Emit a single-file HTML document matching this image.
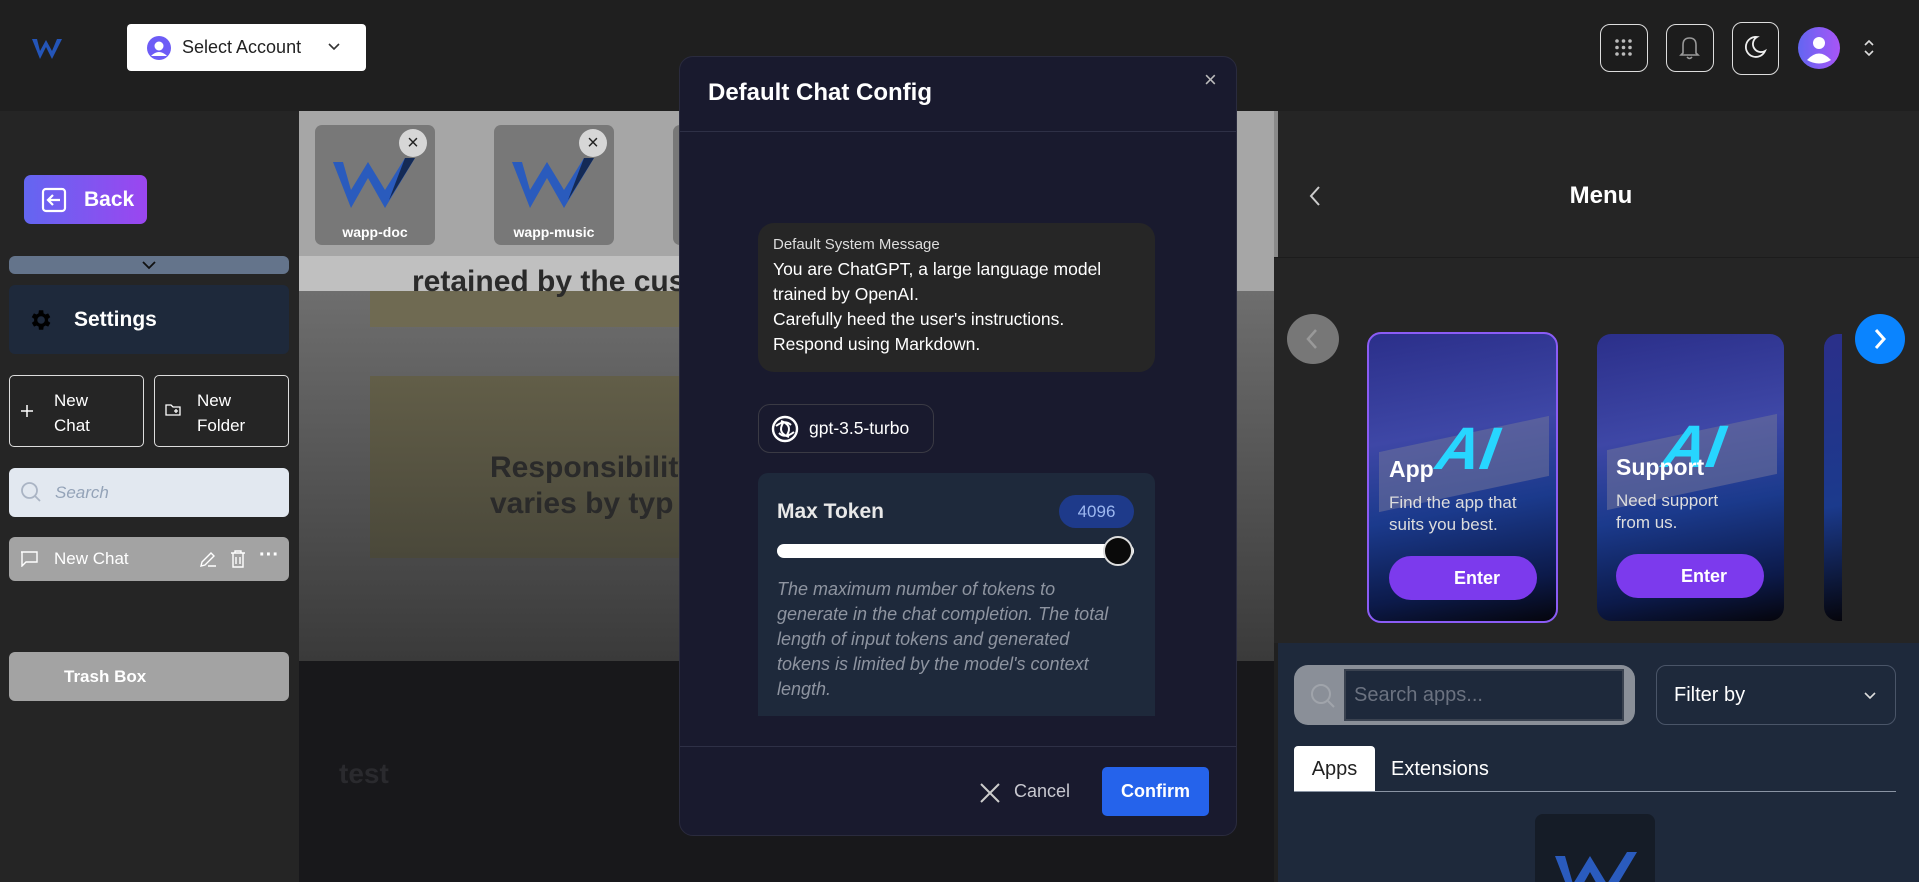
<!DOCTYPE html>
<html><head><meta charset="utf-8">
<style>
*{box-sizing:border-box;margin:0;padding:0}
body{width:1919px;height:882px;overflow:hidden;background:#202020;font-family:"Liberation Sans",sans-serif;color:#fff;position:relative}
.abs{position:absolute}
.btnI{position:absolute;border:1.5px solid #ddd;border-radius:10px;background:#1c1c1c}
</style></head><body>
<!-- top bar -->
<div class="abs" style="left:0;top:0;width:1919px;height:111px;background:#1f1f1f"></div>
<svg class="abs" style="left:31px;top:36px" width="32" height="26" viewBox="0 0 32 26"><path d="M1 3 L9 23 L15 11 L21 23 L31 3 L26 3 L21 15 L15 4 L9 15 L6 3Z" fill="#2455b8"/></svg>
<div class="abs" style="left:127px;top:24px;width:239px;height:47px;background:#fff;border-radius:4px;color:#222;font-size:18px;line-height:47px;padding-left:55px">Select Account
<svg class="abs" style="left:20px;top:12px" width="24" height="24" viewBox="0 0 24 24"><circle cx="12" cy="12" r="12" fill="#6d5cf6"/><circle cx="12" cy="10" r="4.5" fill="#fff"/><path d="M4 20 Q12 12 20 20" fill="#fff"/></svg>
<svg class="abs" style="left:200px;top:18px" width="14" height="10" viewBox="0 0 14 10"><path d="M2 2 L7 7 L12 2" stroke="#333" stroke-width="1.6" fill="none"/></svg></div>
<div class="btnI" style="left:1600px;top:24px;width:48px;height:48px"><svg width="45" height="45" viewBox="0 0 45 45"><g fill="#bbb"><circle cx="16" cy="16" r="1.8"/><circle cx="22.5" cy="16" r="1.8"/><circle cx="29" cy="16" r="1.8"/><circle cx="16" cy="22.5" r="1.8"/><circle cx="22.5" cy="22.5" r="1.8"/><circle cx="29" cy="22.5" r="1.8"/><circle cx="16" cy="29" r="1.8"/><circle cx="22.5" cy="29" r="1.8"/><circle cx="29" cy="29" r="1.8"/></g></svg></div>
<div class="btnI" style="left:1666px;top:24px;width:48px;height:48px"><svg width="45" height="45" viewBox="0 0 45 45"><path d="M16 28 L16 20 Q16 13 22.5 13 Q29 13 29 20 L29 28 L31 30 L14 30Z M20 32 Q22.5 35 25 32" stroke="#999" stroke-width="1.6" fill="none"/></svg></div>
<div class="btnI" style="left:1732px;top:22px;width:47px;height:53px"><svg width="44" height="50" viewBox="0 0 44 50"><path d="M24 14 A10 10 0 1 0 32 28 A8 8 0 0 1 24 14Z" stroke="#eee" stroke-width="1.8" fill="none"/></svg></div>
<svg class="abs" style="left:1798px;top:27px" width="42" height="42" viewBox="0 0 42 42"><defs><linearGradient id="av" x1="0" x2="1"><stop offset="0" stop-color="#6366f1"/><stop offset="1" stop-color="#a855f7"/></linearGradient></defs><circle cx="21" cy="21" r="21" fill="url(#av)"/><circle cx="21" cy="16" r="6" fill="#fff"/><path d="M9 33 Q21 20 33 33 Q21 40 9 33" fill="#fff"/></svg>
<svg class="abs" style="left:1862px;top:39px" width="14" height="18" viewBox="0 0 14 18"><path d="M3 6 L7 2 L11 6 M3 12 L7 16 L11 12" stroke="#ddd" stroke-width="1.6" fill="none"/></svg>

<!-- left sidebar -->
<div class="abs" style="left:0;top:111px;width:299px;height:771px;background:#252525"></div>
<div class="abs" style="left:24px;top:175px;width:123px;height:49px;border-radius:7px;background:linear-gradient(90deg,#6366f1,#9b46f0);font-weight:bold;font-size:21px;line-height:49px;padding-left:60px">Back
<svg class="abs" style="left:17px;top:12px" width="26" height="26" viewBox="0 0 26 26"><rect x="2" y="2" width="22" height="22" rx="3" stroke="#fff" stroke-width="2.2" fill="none"/><path d="M19 13 H8 M12 8 L7 13 L12 18" stroke="#fff" stroke-width="2.2" fill="none"/></svg></div>
<div class="abs" style="left:9px;top:256px;width:280px;height:18px;border-radius:6px;background:#64748b"><svg class="abs" style="left:132px;top:3px" width="16" height="12" viewBox="0 0 16 12"><path d="M2 3 L8 9 L14 3" stroke="#111" stroke-width="1.8" fill="none"/></svg></div>
<div class="abs" style="left:9px;top:285px;width:280px;height:69px;border-radius:6px;background:#1e293b;font-size:21px;font-weight:bold;line-height:69px;padding-left:65px">Settings
<svg class="abs" style="left:18px;top:22px" width="26" height="26" viewBox="0 0 24 24"><path fill="#000" d="M19.4 13a7.5 7.5 0 0 0 0-2l2.1-1.6-2-3.5-2.5 1a7 7 0 0 0-1.7-1L15 3h-4l-.4 2.9a7 7 0 0 0-1.7 1l-2.5-1-2 3.5L6.6 11a7.5 7.5 0 0 0 0 2l-2.1 1.6 2 3.5 2.5-1a7 7 0 0 0 1.7 1L11 21h4l.4-2.9a7 7 0 0 0 1.7-1l2.5 1 2-3.5zM13 15.5a3.5 3.5 0 1 1 0-7 3.5 3.5 0 0 1 0 7z"/></svg></div>
<div class="abs" style="left:9px;top:375px;width:135px;height:72px;border:1.5px solid #ddd;border-radius:5px;font-size:17px;line-height:25px;padding:12px 0 0 44px">New<br>Chat<svg class="abs" style="left:10px;top:28px" width="14" height="14" viewBox="0 0 14 14"><path d="M7 1V13M1 7H13" stroke="#fff" stroke-width="1.5"/></svg></div>
<div class="abs" style="left:154px;top:375px;width:135px;height:72px;border:1.5px solid #ddd;border-radius:5px;font-size:17px;line-height:25px;padding:12px 0 0 42px">New<br>Folder<svg class="abs" style="left:10px;top:27px" width="16" height="14" viewBox="0 0 16 14"><path d="M1 2 H6 L8 4 H15 V12 H1Z M9 8H13 M11 6V10" stroke="#fff" stroke-width="1.3" fill="none"/></svg></div>
<div class="abs" style="left:9px;top:468px;width:280px;height:49px;border-radius:6px;background:#e2e8f0;color:#94a3b8;font-style:italic;font-size:17px;line-height:49px;padding-left:46px">Search
<svg class="abs" style="left:11px;top:13px" width="22" height="22" viewBox="0 0 22 22"><circle cx="9.5" cy="9.5" r="7.5" stroke="#aab4c4" stroke-width="1.8" fill="none"/><path d="M15 15 L20 20" stroke="#aab4c4" stroke-width="1.8"/></svg></div>
<div class="abs" style="left:9px;top:537px;width:280px;height:44px;border-radius:6px;background:#a3a3a3;font-size:17px;line-height:44px;padding-left:45px">New Chat
<svg class="abs" style="left:11px;top:14px" width="18" height="16" viewBox="0 0 18 16"><path d="M1 1H17V11H6L2 15V1" stroke="#fff" stroke-width="1.4" fill="none"/></svg>
<svg class="abs" style="left:190px;top:13px" width="18" height="18" viewBox="0 0 18 18"><path d="M2 16 L3 12 L12 3 L15 6 L6 15Z M9 16H17" stroke="#fff" stroke-width="1.4" fill="none"/></svg>
<svg class="abs" style="left:220px;top:12px" width="18" height="20" viewBox="0 0 18 20"><path d="M2 4H16 M6 4V2H12V4 M4 4V18H14V4 M7 8V15 M11 8V15" stroke="#fff" stroke-width="1.4" fill="none"/></svg>
<span class="abs" style="left:250px;top:-4px;font-size:20px;font-weight:bold">···</span></div>
<div class="abs" style="left:9px;top:652px;width:280px;height:49px;border-radius:6px;background:#a3a3a3;font-size:17px;font-weight:bold;line-height:49px;padding-left:55px">Trash Box</div>

<!-- middle background -->
<div class="abs" style="left:299px;top:111px;width:975px;height:180px;background:#a6a6a6"></div>
<div class="abs" style="left:315px;top:125px;width:120px;height:120px;border-radius:7px;background:#787878"></div>
<div class="abs" style="left:494px;top:125px;width:120px;height:120px;border-radius:7px;background:#787878"></div>
<div class="abs" style="left:673px;top:125px;width:20px;height:120px;border-radius:7px 0 0 7px;background:#787878"></div>
<svg class="abs" style="left:333px;top:150px" width="82" height="62" viewBox="0 0 82 62"><path d="M0 12 L18 58 L35 28 L52 58 L82 8 L72 8 L52 40 L35 12 L18 40 L10 12Z" fill="#2a5bbd"/><path d="M72 8 L82 8 L56 50Z" fill="#142a55"/></svg>
<svg class="abs" style="left:512px;top:150px" width="82" height="62" viewBox="0 0 82 62"><path d="M0 12 L18 58 L35 28 L52 58 L82 8 L72 8 L52 40 L35 12 L18 40 L10 12Z" fill="#2a5bbd"/><path d="M72 8 L82 8 L56 50Z" fill="#142a55"/></svg>
<div class="abs" style="left:315px;top:224px;width:120px;text-align:center;font-size:14px;font-weight:bold">wapp-doc</div>
<div class="abs" style="left:494px;top:224px;width:120px;text-align:center;font-size:14px;font-weight:bold">wapp-music</div>
<div class="abs" style="left:399px;top:129px;width:28px;height:28px;border-radius:50%;background:#d6d6d6;color:#222;text-align:center;line-height:28px;font-size:20px">×</div>
<div class="abs" style="left:579px;top:129px;width:28px;height:28px;border-radius:50%;background:#d6d6d6;color:#222;text-align:center;line-height:28px;font-size:20px">×</div>
<div class="abs" style="left:299px;top:256px;width:380px;height:35px;background:#c0c0c0"></div>
<div class="abs" style="left:299px;top:291px;width:975px;height:370px;background:linear-gradient(#6e6e6e,#3a3a3a)"></div>
<div class="abs" style="left:370px;top:291px;width:320px;height:36px;background:#6f6a52"></div>
<div class="abs" style="left:370px;top:376px;width:320px;height:182px;background:linear-gradient(#625e48,#4a483a)"></div>
<div class="abs" style="left:412px;top:265px;font-size:30px;font-weight:bold;color:#2a2a2a;white-space:nowrap">retained by the cus</div>
<div class="abs" style="left:490px;top:450px;font-size:30px;font-weight:bold;color:#2a2a2a;line-height:36px;white-space:nowrap">Responsibility<br>varies by typ</div>
<div class="abs" style="left:299px;top:661px;width:975px;height:221px;background:#18181b"></div>
<div class="abs" style="left:339px;top:758px;font-size:28px;font-weight:bold;color:#2a2a2e">test</div>

<!-- modal -->
<div class="abs" style="left:679px;top:56px;width:558px;height:780px;border-radius:14px;background:#191a2e;border:1px solid #2a2b3e">
<div class="abs" style="left:28px;top:22px;font-size:24px;font-weight:bold">Default Chat Config</div>
<div class="abs" style="left:524px;top:10px;font-size:22px;color:#bbb">×</div>
<div class="abs" style="left:0;top:74px;width:556px;height:1px;background:#2e3046"></div>
<div class="abs" style="left:78px;top:166px;width:397px;height:149px;border-radius:16px;background:#262626;padding:13px 0 0 15px">
<div style="font-size:15px;color:#ddd">Default System Message</div>
<div style="font-size:17.5px;line-height:25px;margin-top:4px">You are ChatGPT, a large language model<br>trained by OpenAI.<br>Carefully heed the user's instructions.<br>Respond using Markdown.</div></div>
<div class="abs" style="left:78px;top:347px;width:176px;height:49px;border-radius:12px;border:1.5px solid #3a3a44;font-size:17.5px;line-height:46px;padding-left:50px">gpt-3.5-turbo
<svg class="abs" style="left:12px;top:10px" width="28" height="28" viewBox="0 0 28 28"><circle cx="14" cy="14" r="12" stroke="#fff" stroke-width="2.4" fill="none"/><path d="M5 11 Q14 4 20 10 M23 17 Q14 24 8 18 M10 6 Q22 10 16 20 M18 22 Q6 18 12 8" stroke="#fff" stroke-width="2" fill="none"/></svg></div>
<div class="abs" style="left:78px;top:416px;width:397px;height:243px;background:#1e293b;border-radius:10px 10px 0 0">
<div class="abs" style="left:19px;top:27px;font-size:21px;font-weight:bold;color:#e8e8e8">Max Token</div>
<div class="abs" style="left:301px;top:22px;width:75px;height:33px;border-radius:17px;background:#1e3a8a;color:#9db8f0;font-size:17px;text-align:center;line-height:33px">4096</div>
<div class="abs" style="left:19px;top:71px;width:357px;height:14px;border-radius:7px;background:#fff"></div>
<div class="abs" style="left:345px;top:63px;width:30px;height:30px;border-radius:50%;background:#0a0a0a;border:2px solid #ddd"></div>
<div class="abs" style="left:19px;top:104px;width:380px;font-size:18px;font-style:italic;line-height:25px;color:#8e94a0;white-space:nowrap">The maximum number of tokens to<br>generate in the chat completion. The total<br>length of input tokens and generated<br>tokens is limited by the model's context<br>length.</div></div>
<div class="abs" style="left:0;top:689px;width:556px;height:1px;background:#2e3046"></div>
<svg class="abs" style="left:299px;top:725px" width="22" height="22" viewBox="0 0 22 22"><path d="M2 2 L20 20 M20 2 L2 20" stroke="#ccc" stroke-width="2"/></svg>
<div class="abs" style="left:334px;top:724px;font-size:18px;color:#c8c8d0">Cancel</div>
<div class="abs" style="left:422px;top:710px;width:107px;height:49px;border-radius:5px;background:#2563eb;text-align:center;line-height:49px;font-size:18px;font-weight:bold">Confirm</div>
</div>

<!-- right panel -->
<div class="abs" style="left:1274px;top:111px;width:645px;height:532px;background:#252525"></div>
<div class="abs" style="left:1274px;top:111px;width:4px;height:146px;background:#8a8a8a"></div>
<div class="abs" style="left:1274px;top:257px;width:645px;height:1px;background:#1c1c1c"></div>
<svg class="abs" style="left:1308px;top:185px" width="14" height="22" viewBox="0 0 14 22"><path d="M11 2 L3 11 L11 20" stroke="#ccc" stroke-width="2" fill="none"/></svg>
<div class="abs" style="left:1530px;top:182px;width:142px;text-align:center;font-size:24px;font-weight:bold">Menu</div>
<div class="abs" style="left:1287px;top:314px;width:52px;height:50px;border-radius:50%;background:#777"><svg width="52" height="50" viewBox="0 0 52 50"><path d="M29 16 L21 25 L29 34" stroke="#999" stroke-width="2.5" fill="none"/></svg></div>
<div class="abs" style="left:1855px;top:314px;width:50px;height:50px;border-radius:50%;background:#0a84ff"><svg width="50" height="50" viewBox="0 0 50 50"><path d="M21 16 L29 25 L21 34" stroke="#fff" stroke-width="3" fill="none"/></svg></div>
<div class="abs" style="left:1367px;top:332px;width:191px;height:291px;border-radius:14px;border:2.5px solid #8b5cf6;background:linear-gradient(170deg,#2b2f8a 0%,#3e47a6 35%,#1b3a8c 60%,#0c1a4a 85%,#05050c 100%);overflow:hidden">
<div class="abs" style="left:10px;top:100px;width:170px;height:60px;background:#6a6f9a;opacity:.6;transform:skewY(-12deg)"></div>
<div class="abs" style="left:70px;top:80px;font-size:60px;font-weight:bold;color:#27d6ff;transform:skewX(-20deg)">AI</div>
<div class="abs" style="left:20px;top:122px;font-size:23px;font-weight:bold">App</div>
<div class="abs" style="left:20px;top:158px;font-size:17px;line-height:22px;color:#ddd">Find the app that<br>suits you best.</div>
<div class="abs" style="left:20px;top:222px;width:148px;height:44px;border-radius:22px;background:#7c3aed;font-size:18px;font-weight:bold;text-align:center;line-height:44px;padding-left:28px">Enter</div></div>
<div class="abs" style="left:1597px;top:334px;width:187px;height:287px;border-radius:14px;background:linear-gradient(170deg,#2b2f8a 0%,#3e47a6 35%,#1b3a8c 60%,#0c1a4a 85%,#05050c 100%);overflow:hidden">
<div class="abs" style="left:10px;top:98px;width:170px;height:60px;background:#6a6f9a;opacity:.6;transform:skewY(-12deg)"></div>
<div class="abs" style="left:68px;top:78px;font-size:60px;font-weight:bold;color:#27d6ff;transform:skewX(-20deg)">AI</div>
<div class="abs" style="left:19px;top:120px;font-size:23px;font-weight:bold">Support</div>
<div class="abs" style="left:19px;top:156px;font-size:17px;line-height:22px;color:#ddd">Need support<br>from us.</div>
<div class="abs" style="left:19px;top:220px;width:148px;height:44px;border-radius:22px;background:#7c3aed;font-size:18px;font-weight:bold;text-align:center;line-height:44px;padding-left:28px">Enter</div></div>
<div class="abs" style="left:1824px;top:334px;width:18px;height:287px;border-radius:14px 0 0 14px;background:linear-gradient(170deg,#2b2f8a,#1b3a8c 60%,#05050c)"></div>
<div class="abs" style="left:1278px;top:643px;width:641px;height:239px;background:#1e293b"></div>
<div class="abs" style="left:1294px;top:665px;width:341px;height:60px;border-radius:14px;background:#8a8f98"><div class="abs" style="left:50px;top:4px;width:280px;height:52px;background:#1e293b;border:2px solid #3a4250;font-size:20px;color:#6b7280;line-height:48px;padding-left:8px">Search apps...</div>
<svg class="abs" style="left:16px;top:18px" width="26" height="26" viewBox="0 0 26 26"><circle cx="11" cy="11" r="9" stroke="#a0a4ab" stroke-width="2" fill="none"/><path d="M18 18 L24 24" stroke="#a0a4ab" stroke-width="2"/></svg></div>
<div class="abs" style="left:1656px;top:665px;width:240px;height:60px;border-radius:10px;border:1px solid #4a5568;font-size:20px;line-height:58px;padding-left:17px">Filter by<svg class="abs" style="left:206px;top:25px" width="14" height="10" viewBox="0 0 14 10"><path d="M2 2 L7 7 L12 2" stroke="#ddd" stroke-width="1.6" fill="none"/></svg></div>
<div class="abs" style="left:1294px;top:746px;width:81px;height:46px;background:#fff;border-radius:4px 4px 0 0;color:#222;font-size:20px;text-align:center;line-height:46px">Apps</div>
<div class="abs" style="left:1391px;top:746px;font-size:20px;line-height:46px">Extensions</div>
<div class="abs" style="left:1294px;top:791px;width:602px;height:1px;background:#8a94a4"></div>
<div class="abs" style="left:1535px;top:814px;width:120px;height:68px;border-radius:8px 8px 0 0;background:#151c27;overflow:hidden"><svg class="abs" style="left:20px;top:30px" width="82" height="62" viewBox="0 0 82 62"><path d="M0 12 L18 58 L35 28 L52 58 L82 8 L72 8 L52 40 L35 12 L18 40 L10 12Z" fill="#2a5bbd"/></svg></div>
</body></html>
